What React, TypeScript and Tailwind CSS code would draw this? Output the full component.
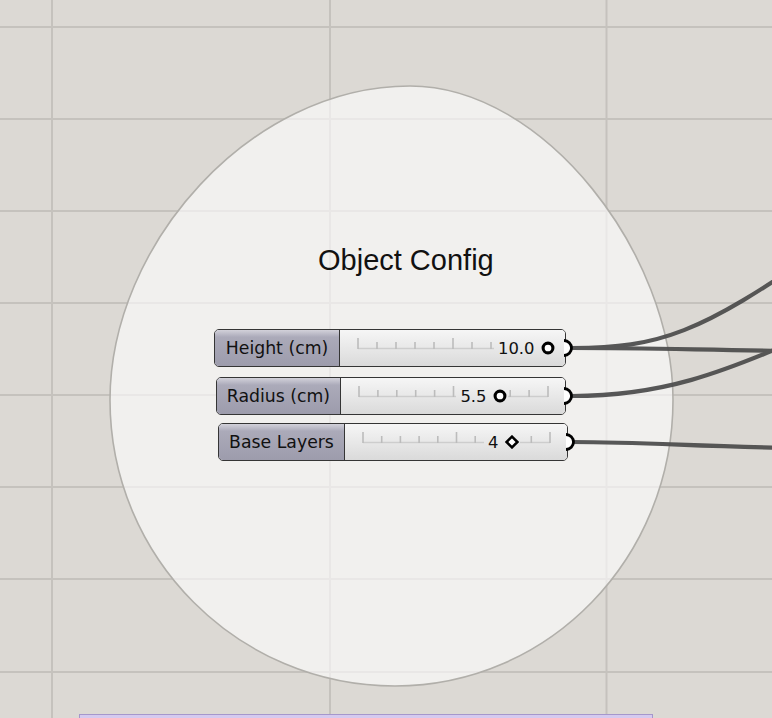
import React from 'react';

type GripKind = 'circle' | 'diamond';

function Grip({ kind }: { kind: GripKind }) {
  if (kind === 'circle') {
    return (
      <svg width="14" height="14" viewBox="0 0 14 14" className="shrink-0">
        <circle cx="7" cy="7" r="4.9" fill="#fff" stroke="#000" strokeWidth="3.1" />
      </svg>
    );
  }
  return (
    <svg width="14" height="14" viewBox="0 0 14 14" className="shrink-0">
      <path d="M7 1.6 L12.4 7 L7 12.4 L1.6 7 Z" fill="#fff" stroke="#000" strokeWidth="2.5" />
    </svg>
  );
}

function Ticks({ end }: { end: number }) {
  const xs: number[] = [];
  for (let i = 0; i <= 10; i++) xs.push(18 + ((end - 18) * i) / 10);
  return (
    <svg className="absolute inset-0 h-full w-full">
      <line x1={18} y1={18.5} x2={end} y2={18.5} stroke="#cdcdcd" strokeWidth="1.5" />
      {xs.map((x, i) => (
        <line
          key={i}
          x1={x}
          x2={x}
          y1={i % 5 === 0 ? 8 : 12}
          y2={19}
          stroke="#bcbcbc"
          strokeWidth="1.6"
        />
      ))}
    </svg>
  );
}

type SliderProps = {
  boxCls: string;
  labelCls: string;
  label: string;
  value: string;
  grip: GripKind;
  valueCls: string;
  tickEnd: number;
};

function Slider({ boxCls, labelCls, label, value, grip, valueCls, tickEnd }: SliderProps) {
  return (
    <div
      className={`absolute flex h-[38px] rounded-[5px] border-[1.6px] border-[#353535] font-['DejaVu_Sans',sans-serif] text-[#111] ${boxCls}`}
    >
      <div
        className={`flex items-center justify-center rounded-l-[4px] border-r-[1.6px] border-[#353535] bg-linear-to-b from-[#d2d1da] from-0% via-[#abaab9] via-20% to-[#9d9cac] text-[17.3px] leading-none ${labelCls}`}
      >
        <span className="pt-[1px]">{label}</span>
      </div>
      <div className="relative flex-1 rounded-r-[4px] bg-linear-to-b from-[#f6f6f6] to-[#dadada]">
        <Ticks end={tickEnd} />
        <div
          className={`absolute top-0 bottom-0 flex items-center gap-[6px] bg-linear-to-b from-[#f6f6f6] to-[#dadada] pl-[4px] pr-[1px] ${valueCls}`}
        >
          <span className="text-[16.4px] leading-none pt-[2px]">{value}</span>
          <Grip kind={grip} />
        </div>
      </div>
      <svg
        width="12"
        height="20"
        viewBox="0 0 12 20"
        className="absolute left-full top-1/2 -ml-[2px] -translate-y-1/2"
      >
        <path d="M1 2.5 A 7.5 7.5 0 0 1 1 17.5 Z" fill="#fff" stroke="none" />
        <path d="M1 2.5 A 7.5 7.5 0 0 1 1 17.5" fill="none" stroke="#000" strokeWidth="2.8" />
      </svg>
    </div>
  );
}

export default function App() {
  const hLines = [27, 119, 211, 303, 395, 487, 579, 672];
  const vLines = [52, 330, 606.5];
  const blob =
    'M110 400 C110 245 250 86 410 86 C545 86 673 255 673 400 C673 558 549 686 395 686 C238 686 110 558 110 400 Z';

  return (
    <div className="relative h-[718px] w-[772px] overflow-hidden bg-[#dcd9d4]">
      {/* canvas grid, blob group and wires */}
      <svg className="absolute inset-0" width="772" height="718" viewBox="0 0 772 718">
        {hLines.map((y) => (
          <line key={`h${y}`} x1={0} x2={772} y1={y} y2={y} stroke="#c5c2bd" strokeWidth="2" />
        ))}
        {vLines.map((x) => (
          <line key={`v${x}`} x1={x} x2={x} y1={0} y2={718} stroke="#c5c2bd" strokeWidth="2" />
        ))}
        <path d={blob} fill="rgba(254,254,253,0.63)" stroke="#b1afaa" strokeWidth="1.6" />
        <g fill="none" stroke="#4f4f4f" strokeWidth="4.2" strokeLinecap="round" opacity="0.95">
          <path d="M572 348 C660 348 700 333 820 250" />
          <path d="M572 348 C650 348 700 350 790 351" />
          <path d="M572 396 C660 396 720 375 820 330" />
          <path d="M572 442 C650 442 700 447 800 448" />
        </g>
      </svg>

      {/* group title */}
      <div className="absolute left-[318px] top-[246px] font-['Liberation_Sans',Arial,sans-serif] text-[29px] leading-none text-[#111]">
        Object Config
      </div>

      <Slider
        boxCls="left-[214px] top-[329px] w-[352px]"
        labelCls="w-[125px]"
        label="Height (cm)"
        value="10.0"
        grip="circle"
        valueCls="right-[9.5px]"
        tickEnd={208}
      />
      <Slider
        boxCls="left-[216px] top-[377px] w-[350px]"
        labelCls="w-[124px]"
        label="Radius (cm)"
        value="5.5"
        grip="circle"
        valueCls="right-[57.5px]"
        tickEnd={207}
      />
      <Slider
        boxCls="left-[218px] top-[423px] w-[350px]"
        labelCls="w-[126px]"
        label="Base Layers"
        value="4"
        grip="diamond"
        valueCls="right-[47.5px]"
        tickEnd={205}
      />

      {/* partially visible group at the bottom */}
      <div className="absolute left-[79px] top-[714px] h-[20px] w-[574px] border border-[#a597cc] bg-[#d5caef]" />
    </div>
  );
}
